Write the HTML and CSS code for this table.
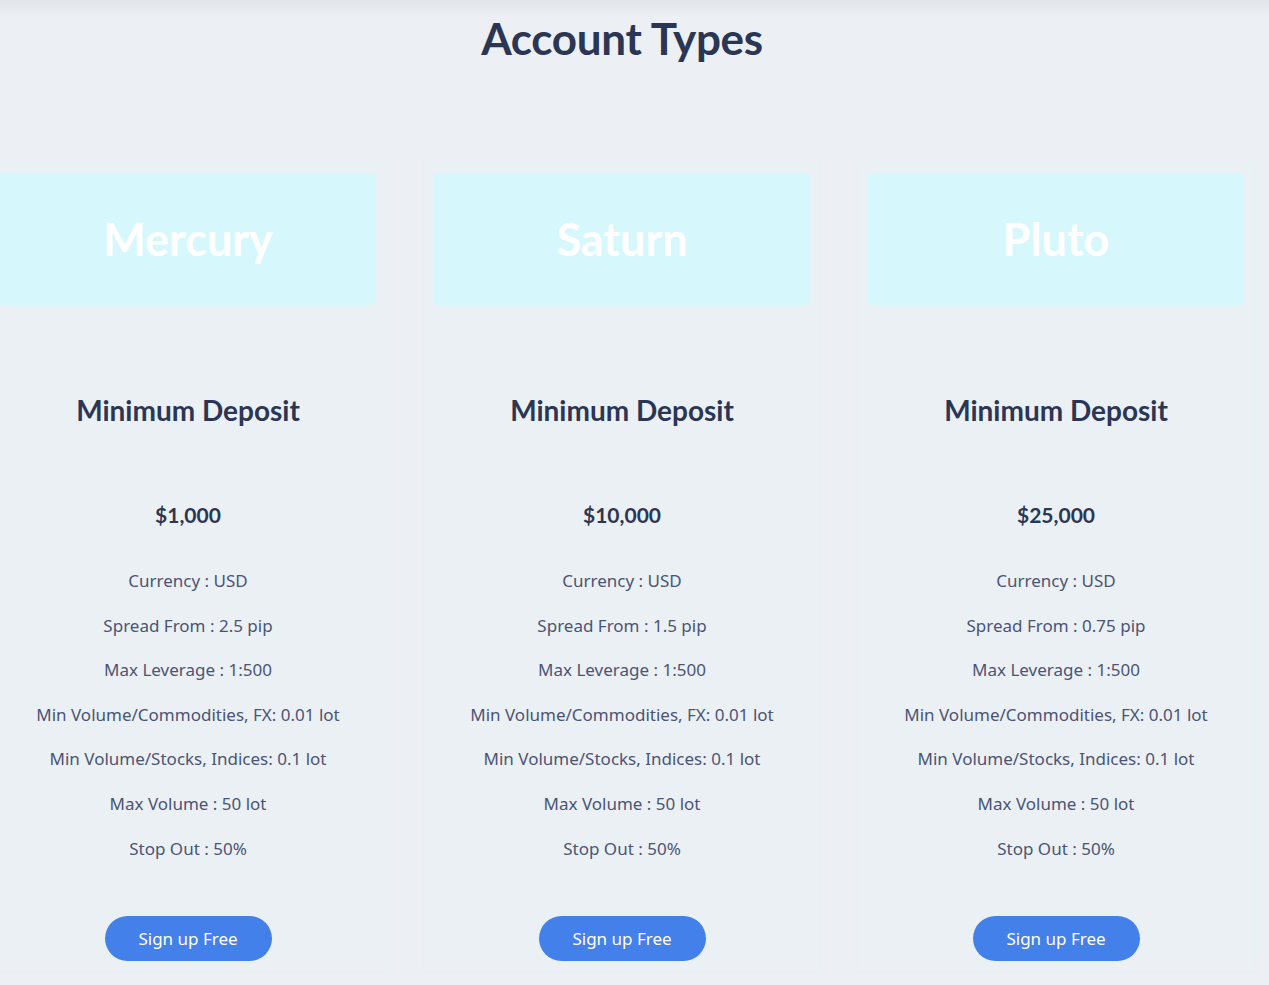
FILE: index.html
```html
<!DOCTYPE html>
<html lang="en">
<head>
<meta charset="utf-8">
<title>Account Types</title>
<link rel="stylesheet" href="styles.css">
</head>
<body>
<div class="topshade"></div>
<section class="accounts">
  <h1 class="title">Account Types</h1>
  <div class="cards">
    <div class="card">
      <div class="card-head"><h2>Mercury</h2></div>
      <h3 class="label">Minimum Deposit</h3>
      <div class="price">$1,000</div>
      <ul class="features">
        <li>Currency : USD</li>
        <li>Spread From : 2.5 pip</li>
        <li>Max Leverage : 1:500</li>
        <li>Min Volume/Commodities, FX: 0.01 lot</li>
        <li>Min Volume/Stocks, Indices: 0.1 lot</li>
        <li>Max Volume : 50 lot</li>
        <li>Stop Out : 50%</li>
      </ul>
      <a class="btn" href="#">Sign up Free</a>
    </div>
    <div class="card">
      <div class="card-head"><h2>Saturn</h2></div>
      <h3 class="label">Minimum Deposit</h3>
      <div class="price">$10,000</div>
      <ul class="features">
        <li>Currency : USD</li>
        <li>Spread From : 1.5 pip</li>
        <li>Max Leverage : 1:500</li>
        <li>Min Volume/Commodities, FX: 0.01 lot</li>
        <li>Min Volume/Stocks, Indices: 0.1 lot</li>
        <li>Max Volume : 50 lot</li>
        <li>Stop Out : 50%</li>
      </ul>
      <a class="btn" href="#">Sign up Free</a>
    </div>
    <div class="card">
      <div class="card-head"><h2>Pluto</h2></div>
      <h3 class="label">Minimum Deposit</h3>
      <div class="price">$25,000</div>
      <ul class="features">
        <li>Currency : USD</li>
        <li>Spread From : 0.75 pip</li>
        <li>Max Leverage : 1:500</li>
        <li>Min Volume/Commodities, FX: 0.01 lot</li>
        <li>Min Volume/Stocks, Indices: 0.1 lot</li>
        <li>Max Volume : 50 lot</li>
        <li>Stop Out : 50%</li>
      </ul>
      <a class="btn" href="#">Sign up Free</a>
    </div>
  </div>
</section>
</body>
</html>
```
FILE: styles.css
```css
* { box-sizing: border-box; }
html, body {
  margin: 0;
  padding: 0;
  background: #ecf0f4;
  overflow: hidden;
}
body {
  font-family: "Noto Sans", "Open Sans", sans-serif;
  color: #2b3654;
  position: relative;
  height: 985px;
}
.topshade {
  position: absolute;
  top: 0; left: 0; right: 0;
  height: 18px;
  background: linear-gradient(#e2e6ea, rgba(236,240,244,0));
}
.accounts {
  width: 1244px;
  display: flex;
  flex-direction: column;
  align-items: center;
  padding-top: 10px;
}
.title {
  margin: 0;
  font-family: Lato, sans-serif;
  font-weight: 700;
  font-size: 44px;
  line-height: 56px;
  color: #2b3654;
  letter-spacing: -0.3px;
}
.cards {
  align-self: flex-start;
  display: flex;
  gap: 38px;
  margin-top: 97px;
  width: 1264px;
  margin-left: -10px;
}
.card {
  width: 396px;
  flex: none;
  padding: 10px;
  display: flex;
  flex-direction: column;
  align-items: center;
  background: #ebf0f4;
  box-shadow: 0 0 0 1px rgba(220, 240, 240, 0.5);
}
.card-head {
  width: 100%;
  height: 132px;
  background: #d6f8fc;
  border-radius: 4px;
  display: flex;
  align-items: center;
  justify-content: center;
}
.card-head h2 {
  margin: 0;
  font-family: Lato, sans-serif;
  font-weight: 700;
  font-size: 45px;
  line-height: 56px;
  color: #ffffff;
}
.label {
  margin: 87px 0 0;
  font-family: Lato, sans-serif;
  font-weight: 700;
  font-size: 28px;
  line-height: 36px;
  color: #2b3654;
}
.price {
  margin-top: 73px;
  font-family: Lato, sans-serif;
  font-weight: 700;
  font-size: 21px;
  line-height: 28px;
  color: #2b3654;
}
.features {
  list-style: none;
  margin: 40px 0 0;
  padding: 0;
  display: flex;
  flex-direction: column;
  align-items: center;
  gap: 20.6px;
}
.features li {
  font-size: 17px;
  line-height: 24px;
  color: #4b5474;
}
.btn {
  margin-top: 55px;
  width: 167px;
  height: 45px;
  border-radius: 23px;
  background: #4480ea;
  color: #ffffff;
  text-decoration: none;
  font-size: 17px;
  display: flex;
  align-items: center;
  justify-content: center;
}
```
